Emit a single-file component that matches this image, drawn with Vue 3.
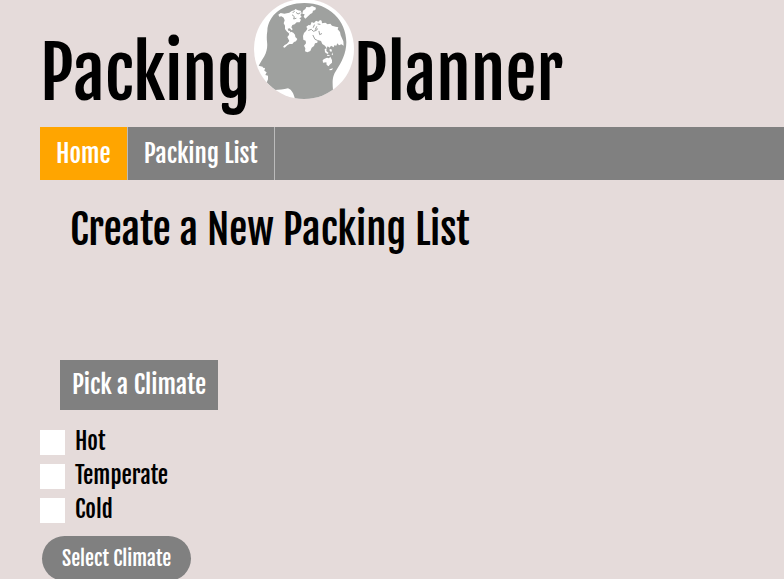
<script setup>
import { ref } from 'vue'

const climates = ['Hot', 'Temperate', 'Cold']
const picked = ref([])
</script>

<template>
  <div class="page">
    <header>
      <h1 class="brand">
        <span>Packing</span>
        <svg class="logo" viewBox="30 0 300 297" aria-hidden="true">
          <defs>
            <clipPath id="disc"><circle cx="180" cy="147" r="150" /></clipPath>
          </defs>
          <circle cx="180" cy="147" r="150" fill="#fff" />
          <g clip-path="url(#disc)">
            <path
              fill="#9fa19f"
              d="M70 93 C72 45 118 9 181 9 C255 9 307 62 307 127 C307 160 292 188 277 211 C267 226 264 238 267 270 L262 300 L154 300 C149 282 145 270 132 265 C119 269 104 270 92 270 L68 248 L72 238 L72 227 L64 225 L68 217 L61 212 L63 204 L57 203 L56 200 L44 197 C49 188 55 179 61 169 C69 154 71 139 69 125 C68 114 68 103 70 93 Z"
            />
            <g fill="#fff">
              <path d="M103 44 L110 39 L121 41 L136 38 L143 33 L151 31 L154 27 L162 31 L170 32 L173 40 L169 45 L173 51 L166 55 L171 59 L167 67 L158 67 L152 73 L145 75 L142 82 L146 88 L143 91 L137 85 L131 86 L133 92 L139 93 L137 97 L142 101 L138 103 L128 94 L123 87 L123 77 L119 70 L122 61 L119 53 L112 49 L106 50 Z" />
              <path d="M136 99 L141 95 L148 98 L153 104 L154 111 L160 117 L156 124 L150 126 L145 132 L137 132 L130 136 L122 143 L117 141 L121 136 L129 131 L136 123 L133 117 L130 111 L135 105 Z" />
              <path d="M177 32 L184 27 L187 21 L196 22 L204 18 L216 23 L214 30 L207 32 L205 39 L199 42 L192 49 L184 56 L179 50 L182 43 L175 41 Z" />
              <path d="M186 93 L190 86 L187 80 L194 75 L199 76 L203 66 L210 69 L216 62 L223 65 L228 60 L233 62 L234 70 L244 68 L251 73 L259 71 L264 77 L275 80 L283 82 L281 88 L288 96 L290 106 L298 124 L299 137 L292 133 L285 136 L280 130 L277 137 L271 136 L269 142 L261 137 L257 143 L251 139 L248 145 L243 137 L235 132 L231 123 L221 120 L220 128 L213 130 L210 138 L203 143 L199 153 L190 157 L183 154 L184 145 L180 137 L186 130 L185 122 L178 119 L177 108 L180 99 Z" />
              <path d="M242 147 L248 145 L247 153 L254 159 L250 162 L243 157 Z M257 146 L264 149 L262 156 L257 153 Z M265 157 L267 166 L263 164 Z M249 164 L257 165 L256 168 L249 167 Z" />
              <path d="M236 180 L242 176 L249 173 L255 175 L259 170 L264 180 L264 188 L257 194 L254 199 L248 195 L247 187 L237 188 Z M256 208 L267 205 L264 210 L257 211 Z" />
            </g>
            <g fill="none" stroke="#9fa19f" stroke-width="3" stroke-linecap="round" stroke-linejoin="round">
              <path d="M145 45 L151 50 L149 57 L156 55 M157 38 L162 42 L168 39 M151 34 L147 38" />
              <path d="M194 91 L202 88 L208 94 L217 91 M218 80 L214 88 L221 87 M225 94 L227 104 L233 101 M207 106 L213 118 L220 121" />
              <path d="M222 72 L228 73 M211 75 L208 82" />
            </g>
          </g>
        </svg>
        <span>Planner</span>
      </h1>
      <nav>
        <a class="active" href="#home">Home</a>
        <a href="#packing-list">Packing List</a>
      </nav>
    </header>

    <main>
      <h2>Create a New Packing List</h2>
      <form @submit.prevent>
        <h3 id="climate-title">Pick a Climate</h3>
        <ul aria-labelledby="climate-title">
          <li v-for="climate in climates" :key="climate">
            <label>
              <input v-model="picked" type="checkbox" :value="climate" />
              <span>{{ climate }}</span>
            </label>
          </li>
        </ul>
        <button type="submit">Select Climate</button>
      </form>
    </main>
  </div>
</template>

<style>
body {
  background: #e5dbda;
}
</style>

<style scoped>
.page {
  padding-left: 40px;
  color: #000;
  font-family: "Fjalla One", "Liberation Sans Narrow", "Arial Narrow", "Liberation Sans", sans-serif;
}

h1,
h2,
h3,
ul {
  margin: 0;
  padding: 0;
  font-weight: 400;
}

.brand {
  display: flex;
  align-items: flex-start;
  height: 127px;
  font-size: 70px;
  line-height: 80px;
}

.brand span {
  padding-top: 33px;
}

.logo {
  flex: none;
  width: 100px;
  height: 99px;
  margin-left: 3px;
}

nav {
  display: flex;
  background: #808080;
}

nav a {
  padding: 11px 16px 10px;
  border-right: 1px solid #bbb;
  color: #fff;
  font-size: 25px;
  line-height: 32px;
  text-decoration: none;
}

nav .active {
  background: #ffa500;
}

h2 {
  padding: 20px 30px 100px;
  font-size: 41px;
  line-height: 60px;
}

h3 {
  width: fit-content;
  margin-left: 20px;
  padding: 9px 12px;
  background: #808080;
  color: #fff;
  font-size: 25px;
  line-height: 32px;
}

ul {
  display: grid;
  gap: 9px;
  padding: 20px 0 13px;
  list-style: none;
}

label {
  display: flex;
  gap: 10px;
  width: fit-content;
  font-size: 23px;
  line-height: 23px;
}

input {
  appearance: none;
  width: 25px;
  height: 25px;
  margin: 0;
  background: #fff;
}

input:checked {
  background: #ffa500;
}

button {
  margin-left: 2px;
  padding: 11px 20px 10px;
  border: 0;
  border-radius: 24px;
  background: #808080;
  color: #fff;
  font-family: inherit;
  font-size: 20px;
  line-height: 24px;
}
</style>
